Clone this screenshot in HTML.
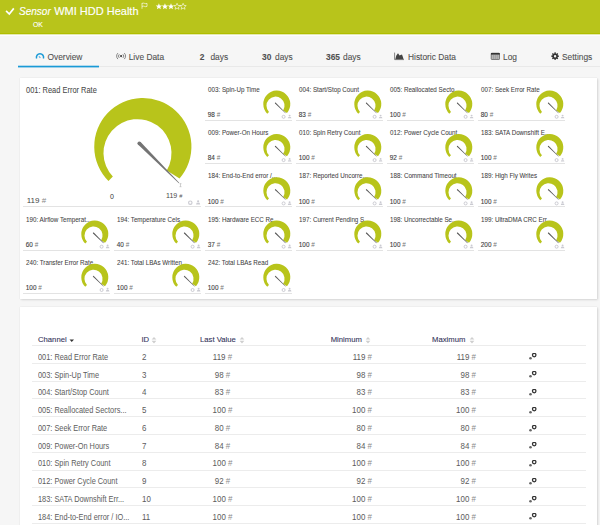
<!DOCTYPE html><html><head><meta charset="utf-8"><style>
*{margin:0;padding:0;box-sizing:border-box}
html,body{width:600px;height:525px;overflow:hidden;background:#f6f6f6;font-family:"Liberation Sans",sans-serif;color:#555}
.a{position:absolute;white-space:nowrap;line-height:1}
#hdr{position:absolute;left:0;top:0;width:600px;height:34px;background:#b8c41b;border-bottom:1px solid #b0be00}
.tab{position:absolute;top:52px;font-size:8.4px;color:#505050;-webkit-text-stroke:.08px #505050;line-height:10px;white-space:nowrap}
.panel{position:absolute;background:#fff;box-shadow:1px 1px 2px rgba(0,0,0,.12),0 0 1px rgba(0,0,0,.12)}
.ct{position:absolute;transform:scaleX(.96);transform-origin:left center;font-size:6.5px;color:#444;-webkit-text-stroke:.06px #444;line-height:8px;white-space:nowrap}
.cv{position:absolute;font-size:6.4px;color:#3c3c3c;-webkit-text-stroke:.1px #3c3c3c;line-height:8px;white-space:nowrap}
.cb{position:absolute;height:1px;background:#e3e3e3}
.th{position:absolute;font-size:7.7px;color:#34345a;-webkit-text-stroke:.1px #34345a;line-height:10px;white-space:nowrap}
.td{position:absolute;font-size:8.2px;color:#5c5c5c;line-height:10px;white-space:nowrap;transform:scaleX(.9);transform-origin:left center}
.rb{position:absolute;left:32px;width:554px;height:1px;background:#ececec}
</style></head><body>

<div id="hdr"></div>
<div style="position:absolute;left:0;top:34px;width:600px;height:1px;background:#e4e9b0"></div><div style="position:absolute;left:0;top:35px;width:600px;height:1px;background:#fcfcff"></div>
<svg class="a" style="left:0;top:0" width="200" height="34"><path d="M6.1 10.8 L9.3 14 L13.8 8.4" stroke="#fff" stroke-width="1.7" fill="none"/><path d="M142 8.8V3M142 3.4q1.3-.6 2.5 0t2.5 0v3q-1.25.6-2.5 0t-2.5 0" stroke="#fff" stroke-width=".65" fill="none"/></svg>
<div class="a" style="left:19px;top:5.5px;font-size:11px;color:#fff;font-style:italic;line-height:11px;transform:scaleX(.91);transform-origin:left center;-webkit-text-stroke:.15px #fff">Sensor</div>
<div class="a" style="left:54.2px;top:5.5px;font-size:11px;color:#fff;line-height:11px;-webkit-text-stroke:.15px #fff">WMI HDD Health</div>
<svg class="a" style="left:0;top:0" width="200" height="20"><path d="M158.90 3.30 L158.03 5.40 L155.76 5.58 L157.49 7.06 L156.96 9.27 L158.90 8.08 L160.84 9.27 L160.31 7.06 L162.04 5.58 L159.77 5.40Z" fill="#fff"/><path d="M164.95 3.30 L164.08 5.40 L161.81 5.58 L163.54 7.06 L163.01 9.27 L164.95 8.08 L166.89 9.27 L166.36 7.06 L168.09 5.58 L165.82 5.40Z" fill="#fff"/><path d="M171.00 3.30 L170.13 5.40 L167.86 5.58 L169.59 7.06 L169.06 9.27 L171.00 8.08 L172.94 9.27 L172.41 7.06 L174.14 5.58 L171.87 5.40Z" fill="#fff"/><path d="M177.05 3.30 L176.18 5.40 L173.91 5.58 L175.64 7.06 L175.11 9.27 L177.05 8.08 L178.99 9.27 L178.46 7.06 L180.19 5.58 L177.92 5.40Z" fill="none" stroke="#fff" stroke-width=".6"/><path d="M183.10 3.30 L182.23 5.40 L179.96 5.58 L181.69 7.06 L181.16 9.27 L183.10 8.08 L185.04 9.27 L184.51 7.06 L186.24 5.58 L183.97 5.40Z" fill="none" stroke="#fff" stroke-width=".6"/></svg>
<div class="a" style="left:32.5px;top:20px;font-size:7.6px;color:#fff;line-height:8px;-webkit-text-stroke:.12px #fff;transform:scaleX(.9);transform-origin:left center;margin-top:.5px">OK</div>
<div style="position:absolute;left:18px;top:66px;width:582px;height:1px;background:#e9e9e9"></div>
<svg class="a" style="left:0;top:60px" width="120" height="10"><rect x="18" y="5.7" width="81" height="1.7" fill="#1a9ad6"/></svg>
<svg class="a" style="left:35px;top:51px" width="10" height="10"><path d="M1.62 7.53 A3.6 3.6 0 1 1 8.38 7.53" stroke="#1a9ad6" stroke-width="1.5" fill="none"/><path d="M3.9 5.3 L5.4 6.9" stroke="#5aaee0" stroke-width="1.1"/></svg>
<div class="tab" style="left:47.5px">Overview</div>
<svg class="a" style="left:112px;top:49px" width="18" height="14"><circle cx="9.1" cy="7.1" r="1.1" fill="#444"/><path d="M7.3 5.3a2.5 2.5 0 0 0 0 3.6M10.9 5.3a2.5 2.5 0 0 1 0 3.6M5.9 4.1a4.2 4.2 0 0 0 0 6M12.3 4.1a4.2 4.2 0 0 1 0 6" stroke="#777" stroke-width=".9" fill="none"/></svg>
<div class="tab" style="left:128.7px">Live Data</div>
<div class="tab" style="left:199.8px"><b>2</b></div><div class="tab" style="left:210.4px">days</div>
<div class="tab" style="left:262px"><b>30</b></div><div class="tab" style="left:275px">days</div>
<div class="tab" style="left:326px"><b>365</b></div><div class="tab" style="left:343px">days</div>
<svg class="a" style="left:390px;top:49px" width="18" height="14"><path d="M4.6 3.6V10.6H14" stroke="#777" stroke-width=".9" fill="none"/><path d="M5.3 10.2L6.3 6.5 8 4.3 9.6 6.4 10.6 6 12 5.6 13.4 9.6 13.4 10.2Z" fill="#444"/></svg>
<div class="tab" style="left:408px">Historic Data</div>
<svg class="a" style="left:488px;top:49px" width="16" height="14"><rect x="3.2" y="4.2" width="8.3" height="6.3" rx=".6" fill="#b5b5b5" stroke="#666" stroke-width=".8"/><rect x="3" y="4" width="8.7" height="1.6" fill="#333"/><path d="M5.5 6v4.3M7.4 6v4.3M9.3 6v4.3" stroke="#8a8a8a" stroke-width=".5"/></svg>
<div class="tab" style="left:503px">Log</div>
<svg class="a" style="left:546px;top:49px" width="16" height="14"><path d="M11.91 6.50 L12.95 6.59 L12.95 7.81 L11.91 7.90 L11.59 8.69 L12.26 9.49 L11.39 10.36 L10.59 9.69 L9.80 10.01 L9.71 11.05 L8.49 11.05 L8.40 10.01 L7.61 9.69 L6.81 10.36 L5.94 9.49 L6.61 8.69 L6.29 7.90 L5.25 7.81 L5.25 6.59 L6.29 6.50 L6.61 5.71 L5.94 4.91 L6.81 4.04 L7.61 4.71 L8.40 4.39 L8.49 3.35 L9.71 3.35 L9.80 4.39 L10.59 4.71 L11.39 4.04 L12.26 4.91 L11.59 5.71Z M9.10 7.20 m-1.2 0a1.2 1.2 0 1 0 2.4 0a1.2 1.2 0 1 0 -2.4 0Z" fill="#333" fill-rule="evenodd"/></svg>
<div class="tab" style="left:562px">Settings</div>
<div class="panel" style="left:19.5px;top:77.5px;width:577.5px;height:221.2px"></div>
<div class="a" style="left:26px;top:86px;font-size:8.2px;color:#484848;line-height:9px;transform:scaleX(.91);transform-origin:left center;-webkit-text-stroke:.05px #484848">001: Read Error Rate</div>
<div class="a" style="left:26.7px;top:196px;font-size:8px;color:#444;line-height:9px">119 <span style="color:#888">#</span></div>
<div class="a" style="left:110px;top:192.7px;font-size:7px;color:#333;line-height:8px">0</div>
<div class="a" style="left:165.7px;top:192px;font-size:7.6px;color:#4a4a4a;line-height:8px;transform:scaleX(.93);transform-origin:left center">119 <span style="font-size:6px;color:#555">#</span></div>
<div class="cb" style="left:23px;top:206px;width:177.7px"></div>
<div class="ct" style="left:207.6px;top:85.8px">003: Spin-Up Time</div>
<div class="cv" style="left:207.8px;top:111.1px">98 <span style="color:#777;-webkit-text-stroke:0">#</span></div>
<div class="cb" style="left:205.0px;top:119.7px;width:87px"></div>
<div class="ct" style="left:298.6px;top:85.8px">004: Start/Stop Count</div>
<div class="cv" style="left:298.8px;top:111.1px">83 <span style="color:#777;-webkit-text-stroke:0">#</span></div>
<div class="cb" style="left:296.0px;top:119.7px;width:87px"></div>
<div class="ct" style="left:389.6px;top:85.8px">005: Reallocated Secto...</div>
<div class="cv" style="left:389.8px;top:111.1px">100 <span style="color:#777;-webkit-text-stroke:0">#</span></div>
<div class="cb" style="left:387.0px;top:119.7px;width:87px"></div>
<div class="ct" style="left:480.6px;top:85.8px">007: Seek Error Rate</div>
<div class="cv" style="left:480.8px;top:111.1px">80 <span style="color:#777;-webkit-text-stroke:0">#</span></div>
<div class="cb" style="left:478.0px;top:119.7px;width:87px"></div>
<div class="ct" style="left:207.6px;top:129.1px">009: Power-On Hours</div>
<div class="cv" style="left:207.8px;top:154.4px">84 <span style="color:#777;-webkit-text-stroke:0">#</span></div>
<div class="cb" style="left:205.0px;top:163.0px;width:87px"></div>
<div class="ct" style="left:298.6px;top:129.1px">010: Spin Retry Count</div>
<div class="cv" style="left:298.8px;top:154.4px">100 <span style="color:#777;-webkit-text-stroke:0">#</span></div>
<div class="cb" style="left:296.0px;top:163.0px;width:87px"></div>
<div class="ct" style="left:389.6px;top:129.1px">012: Power Cycle Count</div>
<div class="cv" style="left:389.8px;top:154.4px">92 <span style="color:#777;-webkit-text-stroke:0">#</span></div>
<div class="cb" style="left:387.0px;top:163.0px;width:87px"></div>
<div class="ct" style="left:480.6px;top:129.1px">183: SATA Downshift E...</div>
<div class="cv" style="left:480.8px;top:154.4px">100 <span style="color:#777;-webkit-text-stroke:0">#</span></div>
<div class="cb" style="left:478.0px;top:163.0px;width:87px"></div>
<div class="ct" style="left:207.6px;top:172.4px">184: End-to-End error /...</div>
<div class="cv" style="left:207.8px;top:197.7px">100 <span style="color:#777;-webkit-text-stroke:0">#</span></div>
<div class="cb" style="left:205.0px;top:206.3px;width:87px"></div>
<div class="ct" style="left:298.6px;top:172.4px">187: Reported Uncorre...</div>
<div class="cv" style="left:298.8px;top:197.7px">100 <span style="color:#777;-webkit-text-stroke:0">#</span></div>
<div class="cb" style="left:296.0px;top:206.3px;width:87px"></div>
<div class="ct" style="left:389.6px;top:172.4px">188: Command Timeout</div>
<div class="cv" style="left:389.8px;top:197.7px">100 <span style="color:#777;-webkit-text-stroke:0">#</span></div>
<div class="cb" style="left:387.0px;top:206.3px;width:87px"></div>
<div class="ct" style="left:480.6px;top:172.4px">189: High Fly Writes</div>
<div class="cv" style="left:480.8px;top:197.7px">100 <span style="color:#777;-webkit-text-stroke:0">#</span></div>
<div class="cb" style="left:478.0px;top:206.3px;width:87px"></div>
<div class="ct" style="left:25.6px;top:215.7px">190: Airflow Temperat...</div>
<div class="cv" style="left:25.8px;top:241.0px">60 <span style="color:#777;-webkit-text-stroke:0">#</span></div>
<div class="cb" style="left:23.0px;top:249.6px;width:87px"></div>
<div class="ct" style="left:116.6px;top:215.7px">194: Temperature Cels...</div>
<div class="cv" style="left:116.8px;top:241.0px">40 <span style="color:#777;-webkit-text-stroke:0">#</span></div>
<div class="cb" style="left:114.0px;top:249.6px;width:87px"></div>
<div class="ct" style="left:207.6px;top:215.7px">195: Hardware ECC Re...</div>
<div class="cv" style="left:207.8px;top:241.0px">37 <span style="color:#777;-webkit-text-stroke:0">#</span></div>
<div class="cb" style="left:205.0px;top:249.6px;width:87px"></div>
<div class="ct" style="left:298.6px;top:215.7px">197: Current Pending S...</div>
<div class="cv" style="left:298.8px;top:241.0px">100 <span style="color:#777;-webkit-text-stroke:0">#</span></div>
<div class="cb" style="left:296.0px;top:249.6px;width:87px"></div>
<div class="ct" style="left:389.6px;top:215.7px">198: Uncorrectable Se...</div>
<div class="cv" style="left:389.8px;top:241.0px">100 <span style="color:#777;-webkit-text-stroke:0">#</span></div>
<div class="cb" style="left:387.0px;top:249.6px;width:87px"></div>
<div class="ct" style="left:480.6px;top:215.7px">199: UltraDMA CRC Err...</div>
<div class="cv" style="left:480.8px;top:241.0px">200 <span style="color:#777;-webkit-text-stroke:0">#</span></div>
<div class="cb" style="left:478.0px;top:249.6px;width:87px"></div>
<div class="ct" style="left:25.6px;top:259.0px">240: Transfer Error Rate</div>
<div class="cv" style="left:25.8px;top:284.3px">100 <span style="color:#777;-webkit-text-stroke:0">#</span></div>
<div class="cb" style="left:23.0px;top:292.9px;width:87px"></div>
<div class="ct" style="left:116.6px;top:259.0px">241: Total LBAs Written</div>
<div class="cv" style="left:116.8px;top:284.3px">100 <span style="color:#777;-webkit-text-stroke:0">#</span></div>
<div class="cb" style="left:114.0px;top:292.9px;width:87px"></div>
<div class="ct" style="left:207.6px;top:259.0px">242: Total LBAs Read</div>
<div class="cv" style="left:207.8px;top:284.3px">100 <span style="color:#777;-webkit-text-stroke:0">#</span></div>
<div class="cb" style="left:205.0px;top:292.9px;width:87px"></div>
<svg class="a" style="left:0;top:0" width="600" height="525"><path d="M108.48 180.97A48.60 48.60 0 1 1 179.53 178.48L166.76 170.51A34.02 34.02 0 1 0 112.85 176.60Z" fill="#b8c41b"/><path d="M137.99 144.61 L178.82 183.18 L179.18 182.82 L140.61 141.99 Z" fill="#747474"/><circle cx="139.30" cy="143.30" r="1.85" fill="#747474"/><circle cx="190.30" cy="202.70" r="1.72" fill="none" stroke="#cbcbd2" stroke-width="1.15"/><circle cx="198.12" cy="201.32" r="1.09" fill="#cbcbd2"/><path d="M196.62 202.81L199.62 202.81L200.19 204.42L196.05 204.42Z" fill="#cbcbd2"/><path d="M180.5 183.5v3.4M179.5 183.7h2M179.5 186.7h2" stroke="#bbb" stroke-width=".7"/><path d="M267.25 113.65A13.50 13.50 0 1 1 286.99 112.96L283.17 110.47A9.04 9.04 0 1 0 268.99 111.91Z" fill="#b8c41b"/><path d="M275.01 103.49 L285.46 113.24 L285.74 112.96 L275.79 102.71 Z" fill="#555"/><circle cx="275.40" cy="103.10" r="0.55" fill="#555"/><circle cx="283.60" cy="116.80" r="1.50" fill="none" stroke="#cbcbd2" stroke-width="1.00"/><circle cx="289.60" cy="115.60" r="0.95" fill="#cbcbd2"/><path d="M288.30 116.90L290.90 116.90L291.40 118.30L287.80 118.30Z" fill="#cbcbd2"/><path d="M358.25 113.65A13.50 13.50 0 1 1 377.99 112.96L374.17 110.47A9.04 9.04 0 1 0 359.99 111.91Z" fill="#b8c41b"/><path d="M366.01 103.49 L376.46 113.24 L376.74 112.96 L366.79 102.71 Z" fill="#555"/><circle cx="366.40" cy="103.10" r="0.55" fill="#555"/><circle cx="374.60" cy="116.80" r="1.50" fill="none" stroke="#cbcbd2" stroke-width="1.00"/><circle cx="380.60" cy="115.60" r="0.95" fill="#cbcbd2"/><path d="M379.30 116.90L381.90 116.90L382.40 118.30L378.80 118.30Z" fill="#cbcbd2"/><path d="M449.25 113.65A13.50 13.50 0 1 1 468.99 112.96L465.17 110.47A9.04 9.04 0 1 0 450.99 111.91Z" fill="#b8c41b"/><path d="M457.01 103.49 L467.46 113.24 L467.74 112.96 L457.79 102.71 Z" fill="#555"/><circle cx="457.40" cy="103.10" r="0.55" fill="#555"/><circle cx="465.60" cy="116.80" r="1.50" fill="none" stroke="#cbcbd2" stroke-width="1.00"/><circle cx="471.60" cy="115.60" r="0.95" fill="#cbcbd2"/><path d="M470.30 116.90L472.90 116.90L473.40 118.30L469.80 118.30Z" fill="#cbcbd2"/><path d="M540.25 113.65A13.50 13.50 0 1 1 559.99 112.96L556.17 110.47A9.04 9.04 0 1 0 541.99 111.91Z" fill="#b8c41b"/><path d="M548.01 103.49 L558.46 113.24 L558.74 112.96 L548.79 102.71 Z" fill="#555"/><circle cx="548.40" cy="103.10" r="0.55" fill="#555"/><circle cx="556.60" cy="116.80" r="1.50" fill="none" stroke="#cbcbd2" stroke-width="1.00"/><circle cx="562.60" cy="115.60" r="0.95" fill="#cbcbd2"/><path d="M561.30 116.90L563.90 116.90L564.40 118.30L560.80 118.30Z" fill="#cbcbd2"/><path d="M267.25 156.95A13.50 13.50 0 1 1 286.99 156.26L283.17 153.77A9.04 9.04 0 1 0 268.99 155.21Z" fill="#b8c41b"/><path d="M275.01 146.79 L285.46 156.54 L285.74 156.26 L275.79 146.01 Z" fill="#555"/><circle cx="275.40" cy="146.40" r="0.55" fill="#555"/><circle cx="283.60" cy="160.10" r="1.50" fill="none" stroke="#cbcbd2" stroke-width="1.00"/><circle cx="289.60" cy="158.90" r="0.95" fill="#cbcbd2"/><path d="M288.30 160.20L290.90 160.20L291.40 161.60L287.80 161.60Z" fill="#cbcbd2"/><path d="M358.25 156.95A13.50 13.50 0 1 1 377.99 156.26L374.17 153.77A9.04 9.04 0 1 0 359.99 155.21Z" fill="#b8c41b"/><path d="M366.01 146.79 L376.46 156.54 L376.74 156.26 L366.79 146.01 Z" fill="#555"/><circle cx="366.40" cy="146.40" r="0.55" fill="#555"/><circle cx="374.60" cy="160.10" r="1.50" fill="none" stroke="#cbcbd2" stroke-width="1.00"/><circle cx="380.60" cy="158.90" r="0.95" fill="#cbcbd2"/><path d="M379.30 160.20L381.90 160.20L382.40 161.60L378.80 161.60Z" fill="#cbcbd2"/><path d="M449.25 156.95A13.50 13.50 0 1 1 468.99 156.26L465.17 153.77A9.04 9.04 0 1 0 450.99 155.21Z" fill="#b8c41b"/><path d="M457.01 146.79 L467.46 156.54 L467.74 156.26 L457.79 146.01 Z" fill="#555"/><circle cx="457.40" cy="146.40" r="0.55" fill="#555"/><circle cx="465.60" cy="160.10" r="1.50" fill="none" stroke="#cbcbd2" stroke-width="1.00"/><circle cx="471.60" cy="158.90" r="0.95" fill="#cbcbd2"/><path d="M470.30 160.20L472.90 160.20L473.40 161.60L469.80 161.60Z" fill="#cbcbd2"/><path d="M540.25 156.95A13.50 13.50 0 1 1 559.99 156.26L556.17 153.77A9.04 9.04 0 1 0 541.99 155.21Z" fill="#b8c41b"/><path d="M548.01 146.79 L558.46 156.54 L558.74 156.26 L548.79 146.01 Z" fill="#555"/><circle cx="548.40" cy="146.40" r="0.55" fill="#555"/><circle cx="556.60" cy="160.10" r="1.50" fill="none" stroke="#cbcbd2" stroke-width="1.00"/><circle cx="562.60" cy="158.90" r="0.95" fill="#cbcbd2"/><path d="M561.30 160.20L563.90 160.20L564.40 161.60L560.80 161.60Z" fill="#cbcbd2"/><path d="M267.25 200.25A13.50 13.50 0 1 1 286.99 199.56L283.17 197.07A9.04 9.04 0 1 0 268.99 198.51Z" fill="#b8c41b"/><path d="M275.01 190.09 L285.46 199.84 L285.74 199.56 L275.79 189.31 Z" fill="#555"/><circle cx="275.40" cy="189.70" r="0.55" fill="#555"/><circle cx="283.60" cy="203.40" r="1.50" fill="none" stroke="#cbcbd2" stroke-width="1.00"/><circle cx="289.60" cy="202.20" r="0.95" fill="#cbcbd2"/><path d="M288.30 203.50L290.90 203.50L291.40 204.90L287.80 204.90Z" fill="#cbcbd2"/><path d="M358.25 200.25A13.50 13.50 0 1 1 377.99 199.56L374.17 197.07A9.04 9.04 0 1 0 359.99 198.51Z" fill="#b8c41b"/><path d="M366.01 190.09 L376.46 199.84 L376.74 199.56 L366.79 189.31 Z" fill="#555"/><circle cx="366.40" cy="189.70" r="0.55" fill="#555"/><circle cx="374.60" cy="203.40" r="1.50" fill="none" stroke="#cbcbd2" stroke-width="1.00"/><circle cx="380.60" cy="202.20" r="0.95" fill="#cbcbd2"/><path d="M379.30 203.50L381.90 203.50L382.40 204.90L378.80 204.90Z" fill="#cbcbd2"/><path d="M449.25 200.25A13.50 13.50 0 1 1 468.99 199.56L465.17 197.07A9.04 9.04 0 1 0 450.99 198.51Z" fill="#b8c41b"/><path d="M457.01 190.09 L467.46 199.84 L467.74 199.56 L457.79 189.31 Z" fill="#555"/><circle cx="457.40" cy="189.70" r="0.55" fill="#555"/><circle cx="465.60" cy="203.40" r="1.50" fill="none" stroke="#cbcbd2" stroke-width="1.00"/><circle cx="471.60" cy="202.20" r="0.95" fill="#cbcbd2"/><path d="M470.30 203.50L472.90 203.50L473.40 204.90L469.80 204.90Z" fill="#cbcbd2"/><path d="M540.25 200.25A13.50 13.50 0 1 1 559.99 199.56L556.17 197.07A9.04 9.04 0 1 0 541.99 198.51Z" fill="#b8c41b"/><path d="M548.01 190.09 L558.46 199.84 L558.74 199.56 L548.79 189.31 Z" fill="#555"/><circle cx="548.40" cy="189.70" r="0.55" fill="#555"/><circle cx="556.60" cy="203.40" r="1.50" fill="none" stroke="#cbcbd2" stroke-width="1.00"/><circle cx="562.60" cy="202.20" r="0.95" fill="#cbcbd2"/><path d="M561.30 203.50L563.90 203.50L564.40 204.90L560.80 204.90Z" fill="#cbcbd2"/><path d="M85.25 243.55A13.50 13.50 0 1 1 104.99 242.86L101.17 240.37A9.04 9.04 0 1 0 86.99 241.81Z" fill="#b8c41b"/><path d="M93.01 233.39 L103.46 243.14 L103.74 242.86 L93.79 232.61 Z" fill="#555"/><circle cx="93.40" cy="233.00" r="0.55" fill="#555"/><circle cx="101.60" cy="246.70" r="1.50" fill="none" stroke="#cbcbd2" stroke-width="1.00"/><circle cx="107.60" cy="245.50" r="0.95" fill="#cbcbd2"/><path d="M106.30 246.80L108.90 246.80L109.40 248.20L105.80 248.20Z" fill="#cbcbd2"/><path d="M176.25 243.55A13.50 13.50 0 1 1 195.99 242.86L192.17 240.37A9.04 9.04 0 1 0 177.99 241.81Z" fill="#b8c41b"/><path d="M184.01 233.39 L194.46 243.14 L194.74 242.86 L184.79 232.61 Z" fill="#555"/><circle cx="184.40" cy="233.00" r="0.55" fill="#555"/><circle cx="192.60" cy="246.70" r="1.50" fill="none" stroke="#cbcbd2" stroke-width="1.00"/><circle cx="198.60" cy="245.50" r="0.95" fill="#cbcbd2"/><path d="M197.30 246.80L199.90 246.80L200.40 248.20L196.80 248.20Z" fill="#cbcbd2"/><path d="M267.25 243.55A13.50 13.50 0 1 1 286.99 242.86L283.17 240.37A9.04 9.04 0 1 0 268.99 241.81Z" fill="#b8c41b"/><path d="M275.01 233.39 L285.46 243.14 L285.74 242.86 L275.79 232.61 Z" fill="#555"/><circle cx="275.40" cy="233.00" r="0.55" fill="#555"/><circle cx="283.60" cy="246.70" r="1.50" fill="none" stroke="#cbcbd2" stroke-width="1.00"/><circle cx="289.60" cy="245.50" r="0.95" fill="#cbcbd2"/><path d="M288.30 246.80L290.90 246.80L291.40 248.20L287.80 248.20Z" fill="#cbcbd2"/><path d="M358.25 243.55A13.50 13.50 0 1 1 377.99 242.86L374.17 240.37A9.04 9.04 0 1 0 359.99 241.81Z" fill="#b8c41b"/><path d="M366.01 233.39 L376.46 243.14 L376.74 242.86 L366.79 232.61 Z" fill="#555"/><circle cx="366.40" cy="233.00" r="0.55" fill="#555"/><circle cx="374.60" cy="246.70" r="1.50" fill="none" stroke="#cbcbd2" stroke-width="1.00"/><circle cx="380.60" cy="245.50" r="0.95" fill="#cbcbd2"/><path d="M379.30 246.80L381.90 246.80L382.40 248.20L378.80 248.20Z" fill="#cbcbd2"/><path d="M449.25 243.55A13.50 13.50 0 1 1 468.99 242.86L465.17 240.37A9.04 9.04 0 1 0 450.99 241.81Z" fill="#b8c41b"/><path d="M457.01 233.39 L467.46 243.14 L467.74 242.86 L457.79 232.61 Z" fill="#555"/><circle cx="457.40" cy="233.00" r="0.55" fill="#555"/><circle cx="465.60" cy="246.70" r="1.50" fill="none" stroke="#cbcbd2" stroke-width="1.00"/><circle cx="471.60" cy="245.50" r="0.95" fill="#cbcbd2"/><path d="M470.30 246.80L472.90 246.80L473.40 248.20L469.80 248.20Z" fill="#cbcbd2"/><path d="M540.25 243.55A13.50 13.50 0 1 1 559.99 242.86L556.17 240.37A9.04 9.04 0 1 0 541.99 241.81Z" fill="#b8c41b"/><path d="M548.01 233.39 L558.46 243.14 L558.74 242.86 L548.79 232.61 Z" fill="#555"/><circle cx="548.40" cy="233.00" r="0.55" fill="#555"/><circle cx="556.60" cy="246.70" r="1.50" fill="none" stroke="#cbcbd2" stroke-width="1.00"/><circle cx="562.60" cy="245.50" r="0.95" fill="#cbcbd2"/><path d="M561.30 246.80L563.90 246.80L564.40 248.20L560.80 248.20Z" fill="#cbcbd2"/><path d="M85.25 286.85A13.50 13.50 0 1 1 104.99 286.16L101.17 283.67A9.04 9.04 0 1 0 86.99 285.11Z" fill="#b8c41b"/><path d="M93.01 276.69 L103.46 286.44 L103.74 286.16 L93.79 275.91 Z" fill="#555"/><circle cx="93.40" cy="276.30" r="0.55" fill="#555"/><circle cx="101.60" cy="290.00" r="1.50" fill="none" stroke="#cbcbd2" stroke-width="1.00"/><circle cx="107.60" cy="288.80" r="0.95" fill="#cbcbd2"/><path d="M106.30 290.10L108.90 290.10L109.40 291.50L105.80 291.50Z" fill="#cbcbd2"/><path d="M176.25 286.85A13.50 13.50 0 1 1 195.99 286.16L192.17 283.67A9.04 9.04 0 1 0 177.99 285.11Z" fill="#b8c41b"/><path d="M184.01 276.69 L194.46 286.44 L194.74 286.16 L184.79 275.91 Z" fill="#555"/><circle cx="184.40" cy="276.30" r="0.55" fill="#555"/><circle cx="192.60" cy="290.00" r="1.50" fill="none" stroke="#cbcbd2" stroke-width="1.00"/><circle cx="198.60" cy="288.80" r="0.95" fill="#cbcbd2"/><path d="M197.30 290.10L199.90 290.10L200.40 291.50L196.80 291.50Z" fill="#cbcbd2"/><path d="M267.25 286.85A13.50 13.50 0 1 1 286.99 286.16L283.17 283.67A9.04 9.04 0 1 0 268.99 285.11Z" fill="#b8c41b"/><path d="M275.01 276.69 L285.46 286.44 L285.74 286.16 L275.79 275.91 Z" fill="#555"/><circle cx="275.40" cy="276.30" r="0.55" fill="#555"/><circle cx="283.60" cy="290.00" r="1.50" fill="none" stroke="#cbcbd2" stroke-width="1.00"/><circle cx="289.60" cy="288.80" r="0.95" fill="#cbcbd2"/><path d="M288.30 290.10L290.90 290.10L291.40 291.50L287.80 291.50Z" fill="#cbcbd2"/></svg>
<div class="panel" style="left:19.5px;top:307px;width:577.5px;height:230px"></div>
<div class="th" style="left:38px;top:334.7px">Channel</div>
<svg class="a" style="left:69px;top:339px" width="6" height="4"><path d="M0.5 0.5H5L2.75 3Z" fill="#333"/></svg>
<div class="th" style="left:141.4px;top:334.7px">ID</div>
<svg class="a" style="left:150.8px;top:336.0px" width="7" height="9"><path d="M0.6 3.6L3 0.9 5.4 3.6ZM0.6 4.8L3 7.5 5.4 4.8Z" fill="#cfcfcf"/></svg>
<div class="th" style="left:200px;top:334.7px">Last Value</div>
<svg class="a" style="left:238.5px;top:336.0px" width="7" height="9"><path d="M0.6 3.6L3 0.9 5.4 3.6ZM0.6 4.8L3 7.5 5.4 4.8Z" fill="#cfcfcf"/></svg>
<div class="th" style="left:330.7px;top:334.7px">Minimum</div>
<svg class="a" style="left:364.8px;top:336.0px" width="7" height="9"><path d="M0.6 3.6L3 0.9 5.4 3.6ZM0.6 4.8L3 7.5 5.4 4.8Z" fill="#cfcfcf"/></svg>
<div class="th" style="left:432px;top:334.7px">Maximum</div>
<svg class="a" style="left:468.8px;top:336.0px" width="7" height="9"><path d="M0.6 3.6L3 0.9 5.4 3.6ZM0.6 4.8L3 7.5 5.4 4.8Z" fill="#cfcfcf"/></svg>
<div class="rb" style="top:345px"></div>
<div class="td" style="left:38px;top:352.8px">001: Read Error Rate</div>
<div class="td" style="left:141.6px;transform:scaleX(.97);top:352.8px">2</div>
<div class="td" style="left:182px;width:81px;text-align:center;transform-origin:50% 50%;transform:scaleX(.97);top:352.8px">119 <span style="color:#8a8a8a">#</span></div>
<div class="td" style="left:272px;width:100px;text-align:right;transform-origin:100% 50%;transform:scaleX(.97);top:352.8px">119 <span style="color:#8a8a8a">#</span></div>
<div class="td" style="left:375.5px;width:100px;text-align:right;transform-origin:100% 50%;transform:scaleX(.97);top:352.8px">119 <span style="color:#8a8a8a">#</span></div>
<svg class="a" style="left:528px;top:353.4px" width="10" height="8"><circle cx="2.5" cy="5.3" r="1.3" fill="#666"/><circle cx="6.2" cy="2.1" r="1.75" fill="none" stroke="#333" stroke-width="1.25"/></svg>
<div class="rb" style="top:363px"></div>
<div class="td" style="left:38px;top:370.6px">003: Spin-Up Time</div>
<div class="td" style="left:141.6px;transform:scaleX(.97);top:370.6px">3</div>
<div class="td" style="left:182px;width:81px;text-align:center;transform-origin:50% 50%;transform:scaleX(.97);top:370.6px">98 <span style="color:#8a8a8a">#</span></div>
<div class="td" style="left:272px;width:100px;text-align:right;transform-origin:100% 50%;transform:scaleX(.97);top:370.6px">98 <span style="color:#8a8a8a">#</span></div>
<div class="td" style="left:375.5px;width:100px;text-align:right;transform-origin:100% 50%;transform:scaleX(.97);top:370.6px">98 <span style="color:#8a8a8a">#</span></div>
<svg class="a" style="left:528px;top:371.2px" width="10" height="8"><circle cx="2.5" cy="5.3" r="1.3" fill="#666"/><circle cx="6.2" cy="2.1" r="1.75" fill="none" stroke="#333" stroke-width="1.25"/></svg>
<div class="rb" style="top:381px"></div>
<div class="td" style="left:38px;top:388.3px">004: Start/Stop Count</div>
<div class="td" style="left:141.6px;transform:scaleX(.97);top:388.3px">4</div>
<div class="td" style="left:182px;width:81px;text-align:center;transform-origin:50% 50%;transform:scaleX(.97);top:388.3px">83 <span style="color:#8a8a8a">#</span></div>
<div class="td" style="left:272px;width:100px;text-align:right;transform-origin:100% 50%;transform:scaleX(.97);top:388.3px">83 <span style="color:#8a8a8a">#</span></div>
<div class="td" style="left:375.5px;width:100px;text-align:right;transform-origin:100% 50%;transform:scaleX(.97);top:388.3px">83 <span style="color:#8a8a8a">#</span></div>
<svg class="a" style="left:528px;top:388.9px" width="10" height="8"><circle cx="2.5" cy="5.3" r="1.3" fill="#666"/><circle cx="6.2" cy="2.1" r="1.75" fill="none" stroke="#333" stroke-width="1.25"/></svg>
<div class="rb" style="top:398px"></div>
<div class="td" style="left:38px;top:406.1px">005: Reallocated Sectors...</div>
<div class="td" style="left:141.6px;transform:scaleX(.97);top:406.1px">5</div>
<div class="td" style="left:182px;width:81px;text-align:center;transform-origin:50% 50%;transform:scaleX(.97);top:406.1px">100 <span style="color:#8a8a8a">#</span></div>
<div class="td" style="left:272px;width:100px;text-align:right;transform-origin:100% 50%;transform:scaleX(.97);top:406.1px">100 <span style="color:#8a8a8a">#</span></div>
<div class="td" style="left:375.5px;width:100px;text-align:right;transform-origin:100% 50%;transform:scaleX(.97);top:406.1px">100 <span style="color:#8a8a8a">#</span></div>
<svg class="a" style="left:528px;top:406.7px" width="10" height="8"><circle cx="2.5" cy="5.3" r="1.3" fill="#666"/><circle cx="6.2" cy="2.1" r="1.75" fill="none" stroke="#333" stroke-width="1.25"/></svg>
<div class="rb" style="top:416px"></div>
<div class="td" style="left:38px;top:423.9px">007: Seek Error Rate</div>
<div class="td" style="left:141.6px;transform:scaleX(.97);top:423.9px">6</div>
<div class="td" style="left:182px;width:81px;text-align:center;transform-origin:50% 50%;transform:scaleX(.97);top:423.9px">80 <span style="color:#8a8a8a">#</span></div>
<div class="td" style="left:272px;width:100px;text-align:right;transform-origin:100% 50%;transform:scaleX(.97);top:423.9px">80 <span style="color:#8a8a8a">#</span></div>
<div class="td" style="left:375.5px;width:100px;text-align:right;transform-origin:100% 50%;transform:scaleX(.97);top:423.9px">80 <span style="color:#8a8a8a">#</span></div>
<svg class="a" style="left:528px;top:424.5px" width="10" height="8"><circle cx="2.5" cy="5.3" r="1.3" fill="#666"/><circle cx="6.2" cy="2.1" r="1.75" fill="none" stroke="#333" stroke-width="1.25"/></svg>
<div class="rb" style="top:434px"></div>
<div class="td" style="left:38px;top:441.6px">009: Power-On Hours</div>
<div class="td" style="left:141.6px;transform:scaleX(.97);top:441.6px">7</div>
<div class="td" style="left:182px;width:81px;text-align:center;transform-origin:50% 50%;transform:scaleX(.97);top:441.6px">84 <span style="color:#8a8a8a">#</span></div>
<div class="td" style="left:272px;width:100px;text-align:right;transform-origin:100% 50%;transform:scaleX(.97);top:441.6px">84 <span style="color:#8a8a8a">#</span></div>
<div class="td" style="left:375.5px;width:100px;text-align:right;transform-origin:100% 50%;transform:scaleX(.97);top:441.6px">84 <span style="color:#8a8a8a">#</span></div>
<svg class="a" style="left:528px;top:442.2px" width="10" height="8"><circle cx="2.5" cy="5.3" r="1.3" fill="#666"/><circle cx="6.2" cy="2.1" r="1.75" fill="none" stroke="#333" stroke-width="1.25"/></svg>
<div class="rb" style="top:452px"></div>
<div class="td" style="left:38px;top:459.4px">010: Spin Retry Count</div>
<div class="td" style="left:141.6px;transform:scaleX(.97);top:459.4px">8</div>
<div class="td" style="left:182px;width:81px;text-align:center;transform-origin:50% 50%;transform:scaleX(.97);top:459.4px">100 <span style="color:#8a8a8a">#</span></div>
<div class="td" style="left:272px;width:100px;text-align:right;transform-origin:100% 50%;transform:scaleX(.97);top:459.4px">100 <span style="color:#8a8a8a">#</span></div>
<div class="td" style="left:375.5px;width:100px;text-align:right;transform-origin:100% 50%;transform:scaleX(.97);top:459.4px">100 <span style="color:#8a8a8a">#</span></div>
<svg class="a" style="left:528px;top:460.0px" width="10" height="8"><circle cx="2.5" cy="5.3" r="1.3" fill="#666"/><circle cx="6.2" cy="2.1" r="1.75" fill="none" stroke="#333" stroke-width="1.25"/></svg>
<div class="rb" style="top:470px"></div>
<div class="td" style="left:38px;top:477.2px">012: Power Cycle Count</div>
<div class="td" style="left:141.6px;transform:scaleX(.97);top:477.2px">9</div>
<div class="td" style="left:182px;width:81px;text-align:center;transform-origin:50% 50%;transform:scaleX(.97);top:477.2px">92 <span style="color:#8a8a8a">#</span></div>
<div class="td" style="left:272px;width:100px;text-align:right;transform-origin:100% 50%;transform:scaleX(.97);top:477.2px">92 <span style="color:#8a8a8a">#</span></div>
<div class="td" style="left:375.5px;width:100px;text-align:right;transform-origin:100% 50%;transform:scaleX(.97);top:477.2px">92 <span style="color:#8a8a8a">#</span></div>
<svg class="a" style="left:528px;top:477.8px" width="10" height="8"><circle cx="2.5" cy="5.3" r="1.3" fill="#666"/><circle cx="6.2" cy="2.1" r="1.75" fill="none" stroke="#333" stroke-width="1.25"/></svg>
<div class="rb" style="top:487px"></div>
<div class="td" style="left:38px;top:495.0px">183: SATA Downshift Err...</div>
<div class="td" style="left:141.6px;transform:scaleX(.97);top:495.0px">10</div>
<div class="td" style="left:182px;width:81px;text-align:center;transform-origin:50% 50%;transform:scaleX(.97);top:495.0px">100 <span style="color:#8a8a8a">#</span></div>
<div class="td" style="left:272px;width:100px;text-align:right;transform-origin:100% 50%;transform:scaleX(.97);top:495.0px">100 <span style="color:#8a8a8a">#</span></div>
<div class="td" style="left:375.5px;width:100px;text-align:right;transform-origin:100% 50%;transform:scaleX(.97);top:495.0px">100 <span style="color:#8a8a8a">#</span></div>
<svg class="a" style="left:528px;top:495.6px" width="10" height="8"><circle cx="2.5" cy="5.3" r="1.3" fill="#666"/><circle cx="6.2" cy="2.1" r="1.75" fill="none" stroke="#333" stroke-width="1.25"/></svg>
<div class="rb" style="top:505px"></div>
<div class="td" style="left:38px;top:512.7px">184: End-to-End error / IO...</div>
<div class="td" style="left:141.6px;transform:scaleX(.97);top:512.7px">11</div>
<div class="td" style="left:182px;width:81px;text-align:center;transform-origin:50% 50%;transform:scaleX(.97);top:512.7px">100 <span style="color:#8a8a8a">#</span></div>
<div class="td" style="left:272px;width:100px;text-align:right;transform-origin:100% 50%;transform:scaleX(.97);top:512.7px">100 <span style="color:#8a8a8a">#</span></div>
<div class="td" style="left:375.5px;width:100px;text-align:right;transform-origin:100% 50%;transform:scaleX(.97);top:512.7px">100 <span style="color:#8a8a8a">#</span></div>
<svg class="a" style="left:528px;top:513.3px" width="10" height="8"><circle cx="2.5" cy="5.3" r="1.3" fill="#666"/><circle cx="6.2" cy="2.1" r="1.75" fill="none" stroke="#333" stroke-width="1.25"/></svg>
<div class="rb" style="top:523px"></div>
</body></html>
